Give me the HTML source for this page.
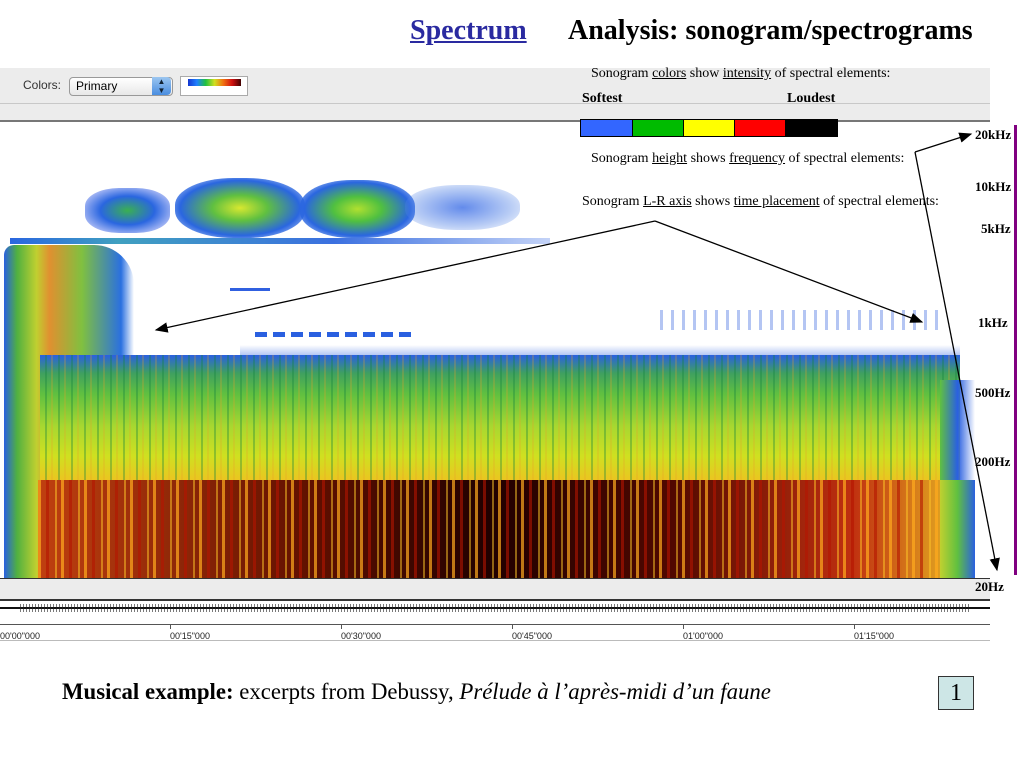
<!DOCTYPE html>
<html><head><meta charset="utf-8"><style>
body{margin:0;width:1024px;height:768px;background:#fff;position:relative;overflow:hidden;font-family:"Liberation Serif",serif}
.a{position:absolute}
.s{font-family:"Liberation Sans",sans-serif}
</style></head><body>
<div class="a" style="left:410px;top:15px;font-size:28px;font-weight:bold;color:#2a2aa0;text-decoration:underline">Spectrum</div>
<div class="a" style="left:568px;top:15px;font-size:28px;font-weight:bold">Analysis: sonogram/spectrograms</div>

<div class="a" style="left:0;top:68px;width:990px;height:52px;background:#ececec;border-bottom:2px solid #777"></div>
<div class="a" style="left:0;top:103px;width:990px;height:1px;background:#c8c8c8"></div>
<div class="a s" style="left:23px;top:78px;font-size:12px;color:#333">Colors:</div>
<div class="a s" style="left:69px;top:77px;width:102px;height:17px;border:1px solid #999;border-radius:4px;background:linear-gradient(#fff,#e8e8e8);font-size:12px;line-height:17px;text-indent:6px">Primary</div>
<div class="a" style="left:152px;top:77px;width:19px;height:18px;background:linear-gradient(#9cc6f0,#4a8de0);border-radius:0 4px 4px 0;color:#123;font-size:8px;text-align:center;line-height:9px">▲<br>▼</div>
<div class="a" style="left:180px;top:76px;width:66px;height:18px;border:1px solid #aaa;background:#fff"></div>
<div class="a" style="left:188px;top:79px;width:53px;height:7px;background:linear-gradient(90deg,#1436d0,#2080ff,#20c040,#d0e020,#f07010,#d01010,#400000)"></div>

<div class="a" style="left:591px;top:66px;font-size:14px">Sonogram <u>colors</u> show <u>intensity</u> of spectral elements:</div>
<div class="a" style="left:582px;top:91px;font-size:14px;font-weight:bold">Softest</div>
<div class="a" style="left:787px;top:91px;font-size:14px;font-weight:bold">Loudest</div>
<div class="a" style="left:580px;top:119px;display:flex;border:1px solid #000">
<div style="width:51px;height:16px;background:#3366ff;border-right:1px solid #000"></div>
<div style="width:50px;height:16px;background:#00bb00;border-right:1px solid #000"></div>
<div style="width:50px;height:16px;background:#ffff00;border-right:1px solid #000"></div>
<div style="width:50px;height:16px;background:#ff0000;border-right:1px solid #000"></div>
<div style="width:51px;height:16px;background:#000"></div></div>

<div class="a" style="left:85px;top:188px;width:85px;height:45px;border-radius:40%;background:radial-gradient(ellipse,#3ab050 0%,#2a66e0 45%,rgba(60,100,230,.5) 75%,transparent 100%)"></div>
<div class="a" style="left:175px;top:178px;width:130px;height:60px;border-radius:45%;background:radial-gradient(ellipse,#d8e830 0%,#60c040 30%,#2a66e0 65%,transparent 100%)"></div>
<div class="a" style="left:300px;top:180px;width:115px;height:58px;border-radius:45%;background:radial-gradient(ellipse,#b0e030 0%,#50c040 30%,#2a66e0 65%,transparent 100%)"></div>
<div class="a" style="left:405px;top:185px;width:115px;height:45px;border-radius:45%;background:radial-gradient(ellipse,rgba(60,110,230,.8) 0%,rgba(80,130,230,.4) 60%,transparent 100%)"></div>
<div class="a" style="left:10px;top:238px;width:540px;height:6px;background:linear-gradient(90deg,#2a66e0,#40a0c0 20%,#3b70e0 60%,rgba(60,110,230,.3))"></div>
<div class="a" style="left:230px;top:288px;width:40px;height:3px;background:#3060e0"></div>
<div class="a" style="left:255px;top:332px;width:160px;height:5px;background:repeating-linear-gradient(90deg,#2a60e0 0 12px,transparent 12px 18px)"></div>
<div class="a" style="left:660px;top:310px;width:280px;height:20px;background:repeating-linear-gradient(90deg,rgba(40,90,220,.7) 0 3px,transparent 3px 11px);opacity:.5"></div>
<div class="a" style="left:240px;top:345px;width:720px;height:20px;background:linear-gradient(#fff0,#2a60e0);opacity:.7"></div>
<div class="a" style="left:4px;top:245px;width:130px;height:335px;background:linear-gradient(90deg,#2a60e0 0%,#50b040 10%,#c0d030 25%,#e09030 35%,#80c040 60%,#2a70e0 90%,transparent 100%);border-radius:10px 40px 0 0"></div>
<div class="a" style="left:40px;top:355px;width:920px;height:130px;background:linear-gradient(#2a60e0 0%,#3fa060 14%,#60c040 30%,#a8d830 55%,#d0e020 78%,#f0c020 100%)"></div>
<div class="a" style="left:40px;top:355px;width:920px;height:130px;background:repeating-linear-gradient(90deg,transparent 0 5px,rgba(20,130,60,.35) 5px 7px,transparent 7px 11px,rgba(230,160,40,.25) 11px 13px)"></div>
<div class="a" style="left:940px;top:380px;width:35px;height:200px;background:linear-gradient(90deg,#60c040,#2a60e0,transparent)"></div>
<div class="a" style="left:38px;top:480px;width:905px;height:98px;background:linear-gradient(90deg,#c04010,#601000 30%,#200000 50%,#500800 70%,#c03010 90%,#e0a020)"></div>
<div class="a" style="left:38px;top:480px;width:905px;height:98px;background:repeating-linear-gradient(90deg,rgba(255,170,30,.7) 0 3px,transparent 3px 8px,rgba(180,20,0,.6) 8px 11px,transparent 11px 17px,rgba(255,200,40,.5) 17px 19px,transparent 19px 23px)"></div>
<div class="a" style="left:940px;top:480px;width:35px;height:98px;background:linear-gradient(90deg,#c0d030,#60c040,#2a60e0)"></div>

<div class="a" style="left:1014px;top:125px;width:3px;height:450px;background:#800080"></div>
<div class="a" style="left:975px;top:127px;font-size:13px;font-weight:bold">20kHz</div>
<div class="a" style="left:975px;top:179px;font-size:13px;font-weight:bold">10kHz</div>
<div class="a" style="left:981px;top:221px;font-size:13px;font-weight:bold">5kHz</div>
<div class="a" style="left:978px;top:315px;font-size:13px;font-weight:bold">1kHz</div>
<div class="a" style="left:975px;top:385px;font-size:13px;font-weight:bold">500Hz</div>
<div class="a" style="left:975px;top:454px;font-size:13px;font-weight:bold">200Hz</div>

<div class="a" style="left:591px;top:151px;font-size:14px">Sonogram <u>height</u> shows <u>frequency</u> of spectral elements:</div>
<div class="a" style="left:582px;top:194px;font-size:14px">Sonogram <u>L-R axis</u> shows <u>time placement</u> of spectral elements:</div>

<div class="a" style="left:0;top:578px;width:990px;height:20px;background:#ececec;border-top:1px solid #333;border-bottom:2px solid #333"></div>
<div class="a" style="left:975px;top:579px;font-size:13px;font-weight:bold">20Hz</div>
<div class="a" style="left:0;top:607px;width:990px;height:2px;background:#111"></div>
<div class="a" style="left:20px;top:604px;width:950px;height:8px;background:repeating-linear-gradient(90deg,#222 0 1px,transparent 1px 3px);opacity:.6"></div>
<div class="a" style="left:0;top:624px;width:990px;height:1px;background:#555"></div>
<div class="a" style="left:0;top:640px;width:990px;height:1px;background:#bbb"></div>
<div class="a s" style="left:0;top:631px;font-size:9px;color:#222;width:1000px">
<span class="a" style="left:0">00'00"000</span><span class="a" style="left:170px">00'15"000</span><span class="a" style="left:341px">00'30"000</span><span class="a" style="left:512px">00'45"000</span><span class="a" style="left:683px">01'00"000</span><span class="a" style="left:854px">01'15"000</span></div>
<div class="a" style="left:170px;top:624px;width:1px;height:5px;background:#555"></div>
<div class="a" style="left:341px;top:624px;width:1px;height:5px;background:#555"></div>
<div class="a" style="left:512px;top:624px;width:1px;height:5px;background:#555"></div>
<div class="a" style="left:683px;top:624px;width:1px;height:5px;background:#555"></div>
<div class="a" style="left:854px;top:624px;width:1px;height:5px;background:#555"></div>

<svg class="a" style="left:0;top:0" width="1024" height="768">
<defs><marker id="m" markerWidth="10" markerHeight="8" refX="9" refY="4" orient="auto"><path d="M0,0L10,4L0,8z" fill="#000"/></marker></defs>
<g stroke="#000" stroke-width="1.3" fill="none">
<path d="M655,221L156,330" marker-end="url(#m)"/>
<path d="M655,221L922,322" marker-end="url(#m)"/>
<path d="M915,152L971,134" marker-end="url(#m)"/>
<path d="M915,152L997,570" marker-end="url(#m)"/>
</g></svg>

<div class="a" style="left:62px;top:679px;font-size:22.8px"><b>Musical example:</b> excerpts from Debussy, <i>Prélude à l’après-midi d’un faune</i></div>
<div class="a" style="left:938px;top:676px;width:34px;height:32px;border:1px solid #333;background:#cde6e6;font-size:24px;text-align:center;line-height:32px">1</div>
</body></html>
